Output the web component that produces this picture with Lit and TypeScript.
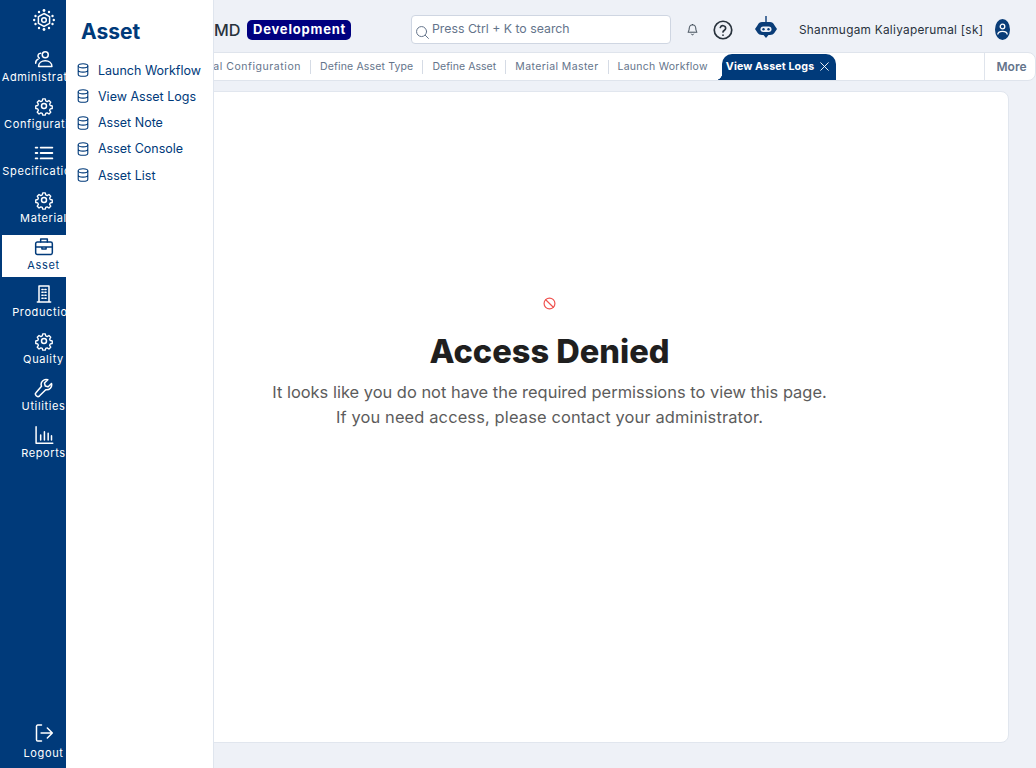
import { LitElement, html, css, svg } from 'lit';
import { customElement } from 'lit/decorators.js';

const s = (w: number, body: unknown, stroke = 1.7) => html`<svg width=${w} height=${w} viewBox="0 0 24 24" fill="none" stroke="currentColor" stroke-width=${stroke} stroke-linecap="round" stroke-linejoin="round">${body}</svg>`;

const gear = svg`<circle cx="12" cy="12" r="3"/><path d="M10.300 2.500h3.400l.6 2.800 1.900.8 2.400-1.500 2.400 2.400-1.500 2.400.8 1.900 2.700.6v3.400l-2.700.6-.8 1.900 1.500 2.400-2.400 2.400-2.400-1.500-1.900.8-.6 2.300h-3.400l-.6-2.300-1.900-.8-2.400 1.500-2.400-2.400 1.500-2.400-.8-1.900-2.700-.6v-3.400l2.700-.6.8-1.900-1.500-2.400 2.400-2.400 2.400 1.500 1.900-.8z" transform="translate(1.200 1.200) scale(.9)"/>`;
const people = svg`<circle cx="13.500" cy="7" r="3.600"/><path d="M5.500 21c0-4.400 3.600-7 8-7s8 2.600 8 7z"/><path d="M8 5a3.200 3.200 0 0 0-1.600 6M2 17c0-2.400 1-4 3-4.800"/>`;
const list = svg`<path d="M8 5.500h14M8 12h14M8 18.500h14M2 5.500h2M2 12h2M2 18.500h2" stroke-width="2.200"/>`;
const briefcase = svg`<rect x="2" y="6" width="20" height="15" rx="2"/><path d="M8 6V2.500h8V6M2 12h20M9.500 12v2.500h5V12"/>`;
const building = svg`<path d="M6 21V2.500h12V21M4 21.500h16"/><path d="M9.500 6.500h1.500M13 6.500h1.500M9.500 10h1.500M13 10h1.500M9.500 13.500h1.500M13 13.500h1.500M9.500 17h1.500M13 17h1.500"/>`;
const wrench = svg`<path d="M21 6.500l-4 4-3.500-.9-.9-3.500 4-4a6 6 0 0 0-7.600 7.800L2.600 17.300a2.900 2.900 0 0 0 4.100 4.100l7.400-7.400A6 6 0 0 0 21 6.500z"/>`;
const chart = svg`<path d="M2.500 2v20h20M8 18v-6M12.500 18V8M17 18v-8M21 18v-5"/>`;
const logout = svg`<path d="M9 2.500H4.500A1.500 1.500 0 0 0 3 4v16a1.500 1.500 0 0 0 1.500 1.500H9M8.500 12H22M16 6l6 6-6 6"/>`;

const railItems = [
  { label: 'Administration', icon: people },
  { label: 'Configuration', icon: gear },
  { label: 'Specifications', icon: list },
  { label: 'Material', icon: gear },
  { label: 'Asset', icon: briefcase, active: true },
  { label: 'Production', icon: building },
  { label: 'Quality', icon: gear },
  { label: 'Utilities', icon: wrench },
  { label: 'Reports', icon: chart },
];

const menuItems = ['Launch Workflow', 'View Asset Logs', 'Asset Note', 'Asset Console', 'Asset List'];

// spacing evens out the width difference to the original font, tab by tab
const tabs = [
  { label: 'Material Configuration', spacing: 0.55 },
  { label: 'Define Asset Type', spacing: 0.15 },
  { label: 'Define Asset', spacing: 0.05 },
  { label: 'Material Master', spacing: 0.4 },
  { label: 'Launch Workflow', spacing: 0.25 },
];

@customElement('app-root')
export class AppRoot extends LitElement {
  static styles = css`
    :host {
      display: block;
      position: relative;
      width: 1036px;
      height: 768px;
      overflow: hidden;
      background: #eef1f7;
      font-family: Inter, "Liberation Sans", sans-serif;
    }
    .shell { display: flex; height: 768px; }
    .rail {
      width: 87px;
      flex: none;
      background: #003a7a;
      color: #fff;
      display: flex;
      flex-direction: column;
      box-sizing: border-box;
    }
    .logo { height: 35px; padding-top: 9px; display: flex; justify-content: center; box-sizing: content-box; }
    .rail-item {
      height: 47px;
      box-sizing: border-box;
      display: flex;
      flex-direction: column;
      align-items: center;
      justify-content: center;
      gap: 1px;
      padding-bottom: 3px;
      font-size: 11px;
      line-height: 14px;
      letter-spacing: .62px;
      white-space: nowrap;
    }
    .rail-item.active {
      background: #fff;
      color: #003a7a;
      height: 42px;
      margin: 3px 0 2px 2px;
      padding-right: 2px;
    }
    .rail-item svg { display: block; }
    .spacer { flex: 1; }
    .rail-item.out { margin-bottom: 3px; padding-bottom: 0; gap: 3px; }
    .flyout {
      position: absolute;
      left: 66px;
      top: 0;
      bottom: 0;
      width: 148px;
      box-sizing: border-box;
      background: #fff;
      border-right: 1px solid #dfe5ee;
      color: #003a7a;
      z-index: 2;
    }
    .flyout h2 {
      margin: 19px 0 12px 15px;
      font-size: 21px;
      line-height: 26px;
      font-weight: 700;
    }
    .flyout .entry {
      display: flex;
      align-items: center;
      gap: 9px;
      height: 26.25px;
      padding-left: 11px;
      font-size: 12.5px;
      white-space: nowrap;
    }
    .main { flex: 1; min-width: 0; display: flex; flex-direction: column; }
    .header {
      height: 52px;
      box-sizing: border-box;
      padding: 7px 0 0 127px;
      display: flex;
      align-items: center;
      color: #28323c;
      flex: none;
    }
    .brand { font-size: 16.2px; font-weight: 500; width: 33px; }
    .badge {
      background: #000080;
      color: #fff;
      font-size: 13px;
      font-weight: 700;
      letter-spacing: .8px;
      border-radius: 5px;
      height: 20px;
      line-height: 19px;
      padding: 0 6px;
      width: 104px;
      box-sizing: border-box;
      white-space: nowrap;
    }
    .search {
      margin-left: 60px;
      width: 260px;
      height: 29px;
      box-sizing: border-box;
      background: #fff;
      border: 1px solid #cfd6e2;
      border-radius: 4px;
      display: flex;
      align-items: center;
      gap: 2px;
      padding: 0 3px;
      color: #64748b;
      font-size: 12.3px;
      white-space: nowrap;
    }
    .search svg { margin-top: 5px; }
    .search span { margin-top: -2px; }
    .tools { display: flex; align-items: center; margin-left: 15px; }
    .bell { margin-right: 14px; display: flex; color: #3a4652; }
    .help { margin-right: 22px; display: flex; color: #28323c; }
    .bot { margin-right: 22px; display: flex; margin-top: -3px; }
    .user { font-size: 11.8px; letter-spacing: .28px; white-space: nowrap; width: 196px; color: #28323c; }
    .avatar { display: flex; }
    .tabbar {
      height: 29px;
      flex: none;
      background: #fff;
      border: 1px solid #dfe4ec;
      border-radius: 0 8px 8px 0;
      display: flex;
      box-sizing: border-box;
      overflow: hidden;
    }
    .tablist { flex: 1; display: flex; align-items: center; height: 100%; min-width: 0; }
    .tab {
      flex: none;
      font-size: 10.5px;
      color: #64748b;
      white-space: nowrap;
      padding: 0 9px;
      border-right: 1px solid #d5dbe5;
      line-height: 14px;
    }
    .tab.first { width: 223px; box-sizing: border-box; text-align: right; }
    .tab.last { border-right: 0; padding-right: 14px; }
    .tab-active {
      position: relative;
      align-self: flex-end;
      height: 26px;
      box-sizing: border-box;
      padding: 0 5px 2px 4px;
      background: #003a7a;
      color: #fff;
      font-size: 10.7px;
      font-weight: 700;
      letter-spacing: .12px;
      border-radius: 10px 10px 0 0;
      display: flex;
      align-items: center;
      gap: 4px;
      white-space: nowrap;
    }
    .tab-active::before {
      content: "";
      position: absolute;
      left: -7px;
      bottom: 0;
      width: 7px;
      height: 7px;
      background: radial-gradient(circle at 0 0, transparent 7px, #003a7a 7.5px);
    }
    .more {
      width: 51px;
      height: 100%;
      flex: none;
      box-sizing: border-box;
      padding-left: 3px;
      border-left: 1px solid #dfe4ec;
      color: #64748b;
      font-size: 12px;
      font-weight: 600;
      display: flex;
      align-items: center;
      justify-content: center;
    }
    .content { flex: 1; padding: 10px 27px 25px 3px; display: flex; min-height: 0; }
    .card {
      flex: 1;
      background: #fff;
      border: 1px solid #e1e6ee;
      border-radius: 8px;
      display: flex;
      flex-direction: column;
      align-items: center;
      padding-top: 205px;
      box-sizing: border-box;
      text-align: center;
    }
    .card svg { display: block; color: #ef5350; }
    .card h1 {
      margin: 15px 0 3px;
      font-size: 32.6px;
      line-height: 52px;
      font-weight: 800;
      color: #1f1f1f;
    }
    .card p {
      margin: 0;
      font-size: 16.45px;
      line-height: 25px;
      color: #5c5c5c;
    }
    .card p .second { letter-spacing: .13px; }
  `;

  render() {
    return html`
      <div class="shell">
        <nav class="rail">
          <div class="logo">
            <svg width="22" height="22" viewBox="0 0 22 22" fill="none" stroke="#fff" stroke-width="1.500">
              <circle cx="11" cy="11" r="2.300"/>
              <path d="M11 4.500l5.600 3.200v6.600L11 17.500l-5.600-3.200V7.700z"/>
              <g fill="#fff" stroke="none">
                <circle cx="11" cy="1.500" r="1.400"/><circle cx="11" cy="20.500" r="1.400"/>
                <circle cx="6" cy="3" r="1.200"/><circle cx="16" cy="3" r="1.200"/>
                <circle cx="6" cy="19" r="1.200"/><circle cx="16" cy="19" r="1.200"/>
                <circle cx="2.500" cy="7" r="1.200"/><circle cx="19.500" cy="7" r="1.200"/>
                <circle cx="2.500" cy="15" r="1.200"/><circle cx="19.500" cy="15" r="1.200"/>
                <circle cx="1.200" cy="11" r="1.200"/><circle cx="20.800" cy="11" r="1.200"/>
              </g>
            </svg>
          </div>
          ${railItems.map(i => html`
            <div class="rail-item ${i.active ? 'active' : ''}">
              ${s(20, i.icon, 1.8)}
              <span>${i.label}</span>
            </div>
          `)}
          <div class="spacer"></div>
          <div class="rail-item out">${s(20, logout, 1.8)}<span>Logout</span></div>
        </nav>

        <aside class="flyout">
          <h2>Asset</h2>
          ${menuItems.map(m => html`
            <div class="entry">
              <svg width="12" height="14" viewBox="0 0 12 14" fill="none" stroke="currentColor" stroke-width="1.100">
                <ellipse cx="6" cy="2.800" rx="4.800" ry="2.100"/>
                <path d="M1.200 2.800v8.400c0 1.200 2.100 2.100 4.800 2.100s4.800-.9 4.800-2.100V2.800M1.200 7c0 1.200 2.100 2.100 4.800 2.100s4.800-.9 4.800-2.100"/>
              </svg>
              <span>${m}</span>
            </div>
          `)}
        </aside>

        <div class="main">
          <header class="header">
            <span class="brand">MD</span>
            <span class="badge">Development</span>
            <label class="search">
              ${s(15, svg`<circle cx="10.500" cy="10.500" r="8"/><path d="M16.500 16.500l5 5"/>`, 1.6)}
              <span>Press Ctrl + K to search</span>
            </label>
            <div class="tools">
              <span class="bell">${s(13, svg`<path d="M12 3a6 6 0 0 0-6 6c0 6-2.500 8-2.500 8h17S18 15 18 9a6 6 0 0 0-6-6zM10 20.500a2.200 2.200 0 0 0 4 0"/>`, 1.8)}</span>
              <span class="help">${s(20, svg`<circle cx="12" cy="12" r="10.500"/><path d="M8.800 9a3.300 3.300 0 0 1 6.400 1c0 2.200-3.200 2.800-3.200 4.300"/><path d="M12 18v.2"/>`, 2)}</span>
              <span class="bot">
                <svg width="22" height="24" viewBox="0 0 22 24" fill="#0a3d78">
                  <rect x="10.300" y="0" width="1.400" height="6"/>
                  <path d="M7 6h8c2 0 3.500 1.300 4.300 3L22 13l-2.700 4c-.8 1.300-2.300 2-4.300 2h-1.500L11 22l-2.500-3H7c-2 0-3.500-.7-4.300-2L0 13l2.700-4C3.500 7.300 5 6 7 6z"/>
                  <rect x="5.500" y="10.500" width="11" height="5.500" rx="2.700" fill="#eef1f7"/>
                  <circle cx="8.500" cy="13.200" r="1.200"/><circle cx="13.500" cy="13.200" r="1.200"/>
                </svg>
              </span>
              <span class="user">Shanmugam Kaliyaperumal [sk]</span>
              <span class="avatar">
                <svg width="15" height="21" viewBox="0 0 15 21">
                  <ellipse cx="7.500" cy="10.500" rx="7.500" ry="10.500" fill="#0a3d78"/>
                  <g fill="none" stroke="#fff" stroke-width="1.300"><circle cx="7.500" cy="7.500" r="2.300"/><path d="M2.800 15.500c0-2.200 2-3.200 4.700-3.200s4.700 1 4.700 3.200"/></g>
                </svg>
              </span>
            </div>
          </header>

          <div class="tabbar">
            <div class="tablist">
              ${tabs.map((t, idx) => html`<span class="tab ${idx === 0 ? 'first' : ''} ${idx === tabs.length - 1 ? 'last' : ''}" style="letter-spacing:${t.spacing}px">${t.label}</span>`)}
              <div class="tab-active">
                <span>View Asset Logs</span>
                ${s(13, svg`<path d="M5 5l14 14M19 5L5 19"/>`, 1.7)}
              </div>
            </div>
            <div class="more">More</div>
          </div>

          <div class="content">
            <section class="card">
              ${s(13, svg`<circle cx="12" cy="12" r="10"/><path d="M5 5l14 14"/>`, 2.2)}
              <h1>Access Denied</h1>
              <p>It looks like you do not have the required permissions to view this page.<br><span class="second">If you need access, please contact your administrator.</span></p>
            </section>
          </div>
        </div>
      </div>
    `;
  }
}
